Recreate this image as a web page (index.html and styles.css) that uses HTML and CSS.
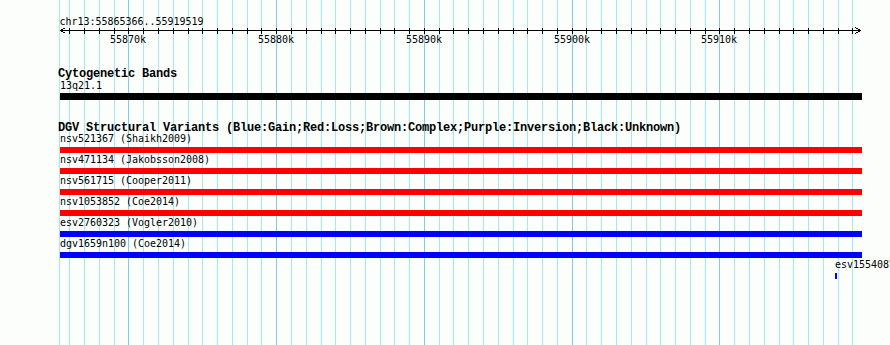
FILE: index.html
```html
<!DOCTYPE html>
<html lang="en">
<head>
<meta charset="utf-8">
<title>chr13:55865366..55919519</title>
<link rel="stylesheet" href="styles.css">
</head>
<body>
<div class="browser">
  <svg class="grid" width="890" height="345" viewBox="0 0 890 345" aria-hidden="true">
    <path class="grid-minor" d="M59.5 0v345M69.5 0v345M84.5 0v345M99.5 0v345M114.5 0v345M143.5 0v345M158.5 0v345M173.5 0v345M188.5 0v345M202.5 0v345M217.5 0v345M232.5 0v345M247.5 0v345M261.5 0v345M291.5 0v345M306.5 0v345M321.5 0v345M335.5 0v345M350.5 0v345M365.5 0v345M380.5 0v345M394.5 0v345M409.5 0v345M439.5 0v345M453.5 0v345M468.5 0v345M483.5 0v345M498.5 0v345M513.5 0v345M527.5 0v345M542.5 0v345M557.5 0v345M586.5 0v345M601.5 0v345M616.5 0v345M631.5 0v345M646.5 0v345M660.5 0v345M675.5 0v345M690.5 0v345M705.5 0v345M734.5 0v345M749.5 0v345M764.5 0v345M779.5 0v345M793.5 0v345M808.5 0v345M823.5 0v345M838.5 0v345M852.5 0v345"/>
    <path class="grid-major" d="M128.5 0v345M276.5 0v345M424.5 0v345M572.5 0v345M719.5 0v345"/>
  </svg>

  <div class="panel">
    <svg class="ruler" width="890" height="48" viewBox="0 0 890 48">
      <text class="ruler-text" x="59.5" y="25">chr13:55865366..55919519</text>
      <path class="axis" d="M60 30.5H861"/>
      <path class="axis arrow" d="M65.5 27.5L60.5 30.5L65.5 33.5M855.5 27.5L860.5 30.5L855.5 33.5"/>
      <path class="axis ticks" d="M69.5 28v6M84.5 28v6M99.5 28v6M114.5 28v6M128.5 28v6M143.5 28v6M158.5 28v6M173.5 28v6M188.5 28v6M202.5 28v6M217.5 28v6M232.5 28v6M247.5 28v6M261.5 28v6M276.5 28v6M291.5 28v6M306.5 28v6M321.5 28v6M335.5 28v6M350.5 28v6M365.5 28v6M380.5 28v6M394.5 28v6M409.5 28v6M424.5 28v6M439.5 28v6M453.5 28v6M468.5 28v6M483.5 28v6M498.5 28v6M513.5 28v6M527.5 28v6M542.5 28v6M557.5 28v6M572.5 28v6M586.5 28v6M601.5 28v6M616.5 28v6M631.5 28v6M646.5 28v6M660.5 28v6M675.5 28v6M690.5 28v6M705.5 28v6M719.5 28v6M734.5 28v6M749.5 28v6M764.5 28v6M779.5 28v6M793.5 28v6M808.5 28v6M823.5 28v6M838.5 28v6M852.5 28v6"/>
      <text class="ruler-text tick-label" x="128" y="43">55870k</text>
      <text class="ruler-text tick-label" x="276" y="43">55880k</text>
      <text class="ruler-text tick-label" x="424" y="43">55890k</text>
      <text class="ruler-text tick-label" x="572" y="43">55900k</text>
      <text class="ruler-text tick-label" x="719" y="43">55910k</text>
    </svg>

    <section class="track track-cyto">
      <h2 class="track-title">Cytogenetic Bands</h2>
      <div class="feature" style="margin-left:60px">
        <div class="feature-label">13q21.1</div>
        <div class="bar band" style="width:802px"></div>
      </div>
    </section>

    <section class="track track-dgv">
      <h2 class="track-title">DGV Structural Variants (Blue:Gain;Red:Loss;Brown:Complex;Purple:Inversion;Black:Unknown)</h2>
      <div class="rows">
        <div class="feature" style="margin-left:60px">
          <div class="feature-label">nsv521367 (Shaikh2009)</div>
          <div class="bar loss" style="width:802px"></div>
        </div>
        <div class="feature" style="margin-left:60px">
          <div class="feature-label">nsv471134 (Jakobsson2008)</div>
          <div class="bar loss" style="width:802px"></div>
        </div>
        <div class="feature" style="margin-left:60px">
          <div class="feature-label">nsv561715 (Cooper2011)</div>
          <div class="bar loss" style="width:802px"></div>
        </div>
        <div class="feature" style="margin-left:60px">
          <div class="feature-label">nsv1053852 (Coe2014)</div>
          <div class="bar loss" style="width:802px"></div>
        </div>
        <div class="feature" style="margin-left:60px">
          <div class="feature-label">esv2760323 (Vogler2010)</div>
          <div class="bar gain" style="width:802px"></div>
        </div>
        <div class="feature" style="margin-left:60px">
          <div class="feature-label">dgv1659n100 (Coe2014)</div>
          <div class="bar gain" style="width:802px"></div>
        </div>
        <div class="feature" style="margin-left:835px">
          <div class="feature-label">esv1554087</div>
          <div class="bar gain" style="width:2px"></div>
        </div>
      </div>
    </section>
  </div>
</div>
</body>
</html>
```

FILE: styles.css
```css
* {
  box-sizing: border-box;
}

html, body {
  margin: 0;
  padding: 0;
  background: #fcfefc;
}

.browser {
  position: relative;
  width: 890px;
  height: 345px;
  overflow: hidden;
  background: #fcfefc;
  color: #000;
  font-family: "DejaVu Sans Mono", "Liberation Mono", monospace;
}

.grid {
  position: absolute;
  left: 0;
  top: 0;
  display: block;
  shape-rendering: crispEdges;
}

.grid-minor {
  stroke: #a6e9ef;
  stroke-width: 1;
  fill: none;
}

.grid-major {
  stroke: #86c9eb;
  stroke-width: 1;
  fill: none;
}

.panel {
  position: relative;
  z-index: 1;
  display: flex;
  flex-direction: column;
}

.ruler {
  display: block;
}

.ruler-text {
  font-family: "DejaVu Sans Mono", "Liberation Mono", monospace;
  font-size: 10px;
  letter-spacing: -0.02px;
  fill: #000;
}

.tick-label {
  text-anchor: middle;
}

.axis {
  stroke: #000;
  stroke-width: 1;
  fill: none;
  shape-rendering: crispEdges;
}

.track {
  display: flex;
  flex-direction: column;
}

.track-cyto {
  margin-top: 21px;
}

.track-dgv {
  margin-top: 24px;
}

.track-title {
  margin: 0;
  padding-left: 58px;
  font-family: "Liberation Mono", "DejaVu Sans Mono", monospace;
  font-size: 12px;
  font-weight: bold;
  line-height: 9px;
  letter-spacing: -0.2px;
  white-space: nowrap;
}

.track-cyto .track-title {
  line-height: 10px;
}

.track-cyto .feature {
  margin-top: 1px;
}

.rows {
  display: flex;
  flex-direction: column;
  gap: 1px;
}

.feature {
  display: flex;
  flex-direction: column;
  align-items: flex-start;
}

.feature-label {
  font-size: 10px;
  line-height: 11px;
  letter-spacing: -0.02px;
  white-space: nowrap;
}

.bar {
  height: 6px;
  margin-top: 3px;
}

.track-cyto .bar {
  height: 7px;
  margin-top: 2px;
}

.band {
  background: #000;
}

.loss {
  background: #ff0000;
}

.gain {
  background: #0000ff;
}
```
